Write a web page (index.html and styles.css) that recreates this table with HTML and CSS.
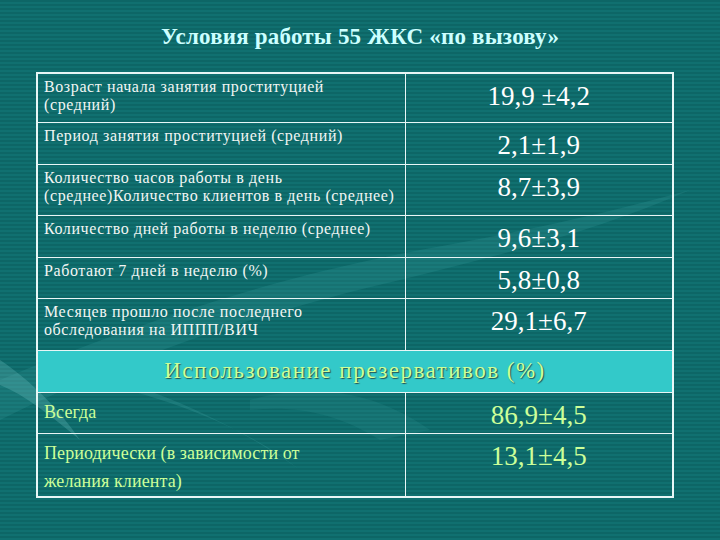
FILE: index.html
```html
<!DOCTYPE html>
<html lang="ru">
<head>
<meta charset="utf-8">
<title>Условия работы 55 ЖКС «по вызову»</title>
<link rel="stylesheet" href="styles.css">
</head>
<body>
<div class="slide">
  <svg class="swoosh" width="720" height="540" viewBox="0 0 720 540" aria-hidden="true">
    <path d="M0 380 C120 330 260 280 420 250 C520 232 600 215 690 190 C600 230 500 255 400 280 C250 315 120 360 0 420 Z" fill="#3aa0a0" opacity="0.22"/>
    <path d="M40 360 C140 380 230 420 300 470 C250 430 170 395 60 375 Z" fill="#5bbcbc" opacity="0.18"/>
    <path d="M0 360 C30 380 60 410 80 440 C50 415 25 395 0 385 Z" fill="#7fd0d0" opacity="0.25"/>
    <path d="M250 400 C320 380 380 395 430 430 L380 440 C340 415 300 405 250 410 Z" fill="#2a8c8c" opacity="0.25"/>
  </svg>
  <h1 class="title">Условия работы 55 ЖКС «по вызову»</h1>
  <table class="data">
    <colgroup><col class="c-label"><col class="c-value"></colgroup>
    <tbody class="top">
      <tr class="r1"><td class="label">Возраст начала занятия проституцией<br>(средний)</td><td class="value">19,9 ±4,2</td></tr>
      <tr class="r2"><td class="label">Период занятия проституцией (средний)</td><td class="value">2,1±1,9</td></tr>
      <tr class="r3"><td class="label">Количество часов работы в день<br>(среднее)Количество клиентов в день (среднее)</td><td class="value">8,7±3,9</td></tr>
      <tr class="r4"><td class="label">Количество дней работы в неделю (среднее)</td><td class="value">9,6±3,1</td></tr>
      <tr class="r5"><td class="label">Работают 7 дней в неделю (%)</td><td class="value">5,8±0,8</td></tr>
      <tr class="r6"><td class="label">Месяцев прошло после последнего<br>обследования на ИППП/ВИЧ</td><td class="value">29,1±6,7</td></tr>
    </tbody>
    <tbody class="bottom">
      <tr class="head"><td class="section" colspan="2">Использование презервативов (%)</td></tr>
      <tr class="r8"><td class="label">Всегда</td><td class="value">86,9±4,5</td></tr>
      <tr class="r9"><td class="label">Периодически (в зависимости от<br>желания клиента)</td><td class="value">13,1±4,5</td></tr>
    </tbody>
  </table>
</div>
</body>
</html>
```

FILE: styles.css
```css
html, body {
  margin: 0;
  padding: 0;
}
body {
  width: 720px;
  height: 540px;
  overflow: hidden;
  background-color: #0e6969;
  background-image: repeating-linear-gradient(180deg, #0d6666 0px, #0d6666 2px, #107070 2px, #107070 4px);
  font-family: "Liberation Serif", "DejaVu Serif", serif;
}
.slide {
  position: relative;
  width: 720px;
  height: 540px;
  padding-top: 24px;
  box-sizing: border-box;
}
.swoosh {
  position: absolute;
  left: 0;
  top: 0;
  pointer-events: none;
}
.title {
  position: relative;
  margin: 0 0 22px 0;
  text-align: center;
  font-size: 23px;
  line-height: 26px;
  font-weight: bold;
  color: #ccffff;
  letter-spacing: 0.2px;
}
.data {
  position: relative;
  margin-left: 36px;
  width: 636px;
  border-collapse: collapse;
  border: 2px solid #e8f6f6;
  table-layout: fixed;
}
.c-label { width: 368px; }
.c-value { width: 268px; }
.data td {
  border: 1px solid #e8f6f6;
  vertical-align: top;
  padding: 0;
}
.label {
  padding: 4px 2px 0 6px !important;
  font-size: 16px;
  line-height: 18px;
  letter-spacing: 0.6px;
  color: #f2f6f4;
  white-space: nowrap;
}
.value {
  text-align: center;
  padding-top: 7px !important;
  font-size: 27px;
  line-height: 30px;
  color: #ffffff;
}
.r1 { height: 49px; }
.r2 { height: 42px; }
.r3 { height: 51px; }
.r4 { height: 42px; }
.r5 { height: 41px; }
.r6 { height: 52px; }
.head { height: 42px; }
.r8 { height: 41px; }
.r9 { height: 64px; }
.section {
  background: #33c9c9;
  text-align: center;
  vertical-align: middle !important;
  font-size: 23px;
  line-height: 26px;
  letter-spacing: 1.5px;
  color: #ccff99;
  text-shadow: 1px 1px 1px #245050;
}
.bottom .label {
  padding-top: 5px !important;
  font-size: 18px;
  line-height: 28px;
  letter-spacing: 0.1px;
  color: #ccff99;
}
.bottom .value {
  color: #ccff99;
}
```
